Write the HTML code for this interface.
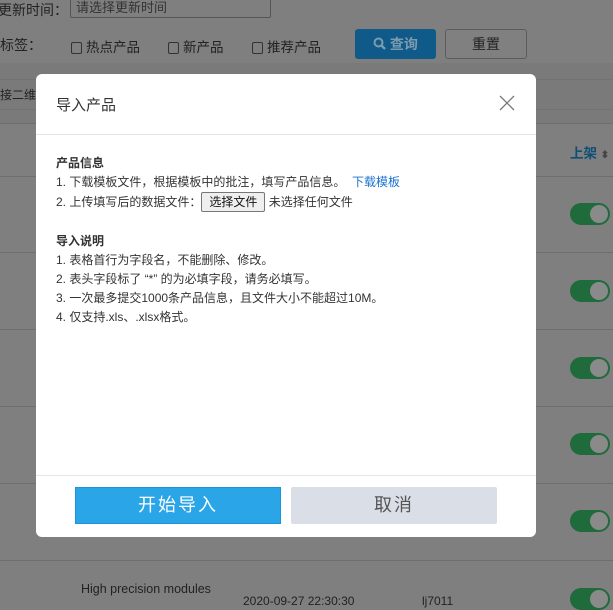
<!DOCTYPE html>
<html><head><meta charset="utf-8"><style>
*{margin:0;padding:0;box-sizing:border-box}
body{width:613px;height:597px;overflow:hidden;background:#7f7f7f;font-family:"Liberation Sans","Noto Sans CJK SC",sans-serif;font-size:13px;color:#222;position:relative}
.a{position:absolute}
.line{position:absolute;left:0;width:613px;height:1px;background:#6e6e6e}
.tog{position:absolute;left:570px;width:40px;height:22px;border-radius:11px;background:#1f6b3c}
.tog:after{content:"";position:absolute;right:2px;top:2px;width:18px;height:18px;border-radius:50%;background:#8a8a8a}
.cb{display:inline-block;width:11px;height:12px;border:1px solid #333;border-radius:2px;vertical-align:-2px;margin-right:4px}
.modal{position:absolute;left:36px;top:74px;width:500px;height:463px;background:#fff;border-radius:6px}
.body{position:absolute;left:56px;top:154px;font-size:12px;line-height:19.2px;color:#333}
</style></head><body>
<div class="a" style="left:0;top:63px;width:613px;height:61px;background:#7a7a7a"></div>
<div class="a" style="left:-2px;top:0px;font-size:14px;color:#222">更新时间：</div>
<div class="a" style="left:70px;top:-2px;width:201px;height:20px;border:1px solid #555;border-radius:2px;padding-left:5px;font-size:13px;color:#333;line-height:18px">请选择更新时间</div>
<div class="a" style="left:0;top:35px;font-size:14px;color:#222">标签：</div>
<div class="a" style="left:71px;top:36px;font-size:13.5px;color:#222"><span class="cb"></span>热点产品</div>
<div class="a" style="left:168px;top:36px;font-size:13.5px;color:#222"><span class="cb"></span>新产品</div>
<div class="a" style="left:252px;top:36px;font-size:13.5px;color:#222"><span class="cb"></span>推荐产品</div>
<div class="a" style="left:355px;top:29px;width:81px;height:30px;border-radius:3px;background:#0f5a88;color:#7c9ab0;font-size:14px;text-align:center;line-height:30px;font-weight:bold"><svg width="13" height="13" viewBox="0 0 13 13" style="vertical-align:-1px"><circle cx="5.5" cy="5.5" r="4" stroke="#7c9ab0" stroke-width="2" fill="none"/><path d="M8.5 8.5L12 12" stroke="#7c9ab0" stroke-width="2.4"/></svg> 查询</div>
<div class="a" style="left:445px;top:29px;width:82px;height:30px;border-radius:3px;border:1px solid #5c5c5c;background:#808080;color:#222;font-size:14px;text-align:center;line-height:28px">重置</div>
<div class="a" style="left:0;top:86px;font-size:12px;color:#222">接二维码</div>
<div class="line" style="top:79px;background:#727272"></div>
<div class="line" style="top:109px;background:#727272"></div>
<div class="line" style="top:123px"></div>
<div class="a" style="left:570px;top:142px;font-size:13.5px;color:#0e4e78;font-weight:bold">上架 <span style="color:#444;font-size:10px">⬍</span></div>
<div class="line" style="top:176px"></div>
<div class="line" style="top:252px"></div>
<div class="line" style="top:329px"></div>
<div class="line" style="top:406px"></div>
<div class="line" style="top:483px"></div>
<div class="line" style="top:560px"></div>
<div class="tog" style="top:203px"></div>
<div class="tog" style="top:280px"></div>
<div class="tog" style="top:357px"></div>
<div class="tog" style="top:433px"></div>
<div class="tog" style="top:510px"></div>
<div class="tog" style="top:588px"></div>
<div class="a" style="left:81px;top:582px;font-size:12.5px;color:#222">High precision modules</div>
<div class="a" style="left:243px;top:594px;font-size:12px;color:#222">2020-09-27 22:30:30</div>
<div class="a" style="left:422px;top:594px;font-size:12px;color:#222">lj7011</div>
<div class="modal">
<div class="a" style="left:20px;top:20px;font-size:15px;color:#333">导入产品</div>
<svg class="a" style="left:463px;top:21px" width="16" height="16" viewBox="0 0 16 16"><path d="M1 1L15 15M15 1L1 15" stroke="#777" stroke-width="1.3"/></svg>
<div class="a" style="left:0;top:60px;width:500px;height:1px;background:#dde3e8"></div>
<div class="a" style="left:0;top:401px;width:500px;height:1px;background:#e5e5e5"></div>
<div class="a" style="left:39px;top:413px;width:206px;height:37px;background:#2aa6e8;border:1px solid #1d94d6;color:#fff;font-size:18px;text-align:center;line-height:35px;letter-spacing:2px">开始导入</div>
<div class="a" style="left:255px;top:413px;width:206px;height:37px;background:#dadee7;color:#555;font-size:18px;text-align:center;line-height:37px;letter-spacing:2px;border-radius:2px">取消</div>
</div>
<div class="body">
<div style="font-weight:bold">产品信息</div>
<div>1. 下载模板文件，根据模板中的批注，填写产品信息。 <span style="color:#1a73d0">&nbsp;下载模板</span></div>
<div>2. 上传填写后的数据文件：<span style="display:inline-block;border:1px solid #777;background:#efefef;border-radius:2px;padding:0 7px;line-height:18px;color:#111">选择文件</span> 未选择任何文件</div>
<div style="height:19px"></div>
<div style="font-weight:bold">导入说明</div>
<div>1. 表格首行为字段名，不能删除、修改。</div>
<div>2. 表头字段标了 “*” 的为必填字段，请务必填写。</div>
<div>3. 一次最多提交1000条产品信息，且文件大小不能超过10M。</div>
<div>4. 仅支持.xls、.xlsx格式。</div>
</div>
</body></html>
